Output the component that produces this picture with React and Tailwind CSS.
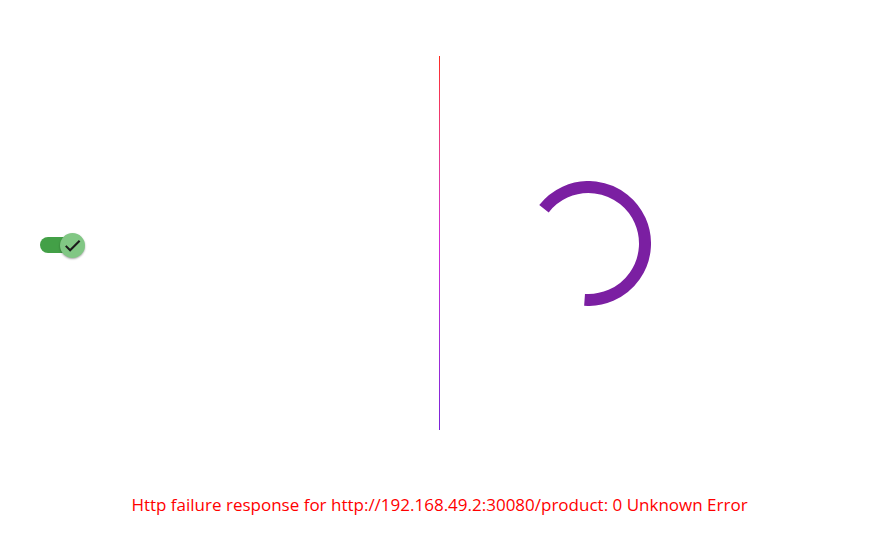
import React from "react";

function Toggle() {
  return (
    <div className="relative w-[46px] h-[24px] flex items-center">
      <div className="w-[40px] h-[16px] rounded-full bg-[#43a047]" />
      <div className="absolute left-[20px] top-0 w-[25px] h-[25px] rounded-full bg-[#81c784] shadow-[0_1px_2px_rgba(0,0,0,0.35)] flex items-center justify-center">
        <svg width="19" height="19" viewBox="0 0 24 24" fill="none">
          <path d="M3.5 12.5l5.5 5.5L21 6" stroke="#1b1b1b" strokeWidth="2.6" strokeLinecap="butt" />
        </svg>
      </div>
    </div>
  );
}

function Spinner() {
  // arc from ~218deg clockwise to ~94deg (screen coords), radius 56.5, stroke 12
  const cx = 62.5;
  const cy = 62.5;
  const r = 56.5;
  const a1 = (218 * Math.PI) / 180;
  const a2 = (94 * Math.PI) / 180;
  const x1 = cx + r * Math.cos(a1);
  const y1 = cy + r * Math.sin(a1);
  const x2 = cx + r * Math.cos(a2);
  const y2 = cy + r * Math.sin(a2);
  return (
    <svg width="125" height="125" viewBox="0 0 125 125">
      <path
        d={`M${x1} ${y1} A${r} ${r} 0 1 1 ${x2} ${y2}`}
        stroke="#7b1fa2"
        strokeWidth="12"
        fill="none"
      />
    </svg>
  );
}

export default function App() {
  return (
    <div className="w-[885px] h-[550px] bg-white flex flex-col" style={{ fontFamily: "'Open Sans', 'Noto Sans', sans-serif" }}>
      <div className="flex flex-row h-[374px] mt-[56px]">
        <div className="w-[439px] flex items-center pl-[40px] pt-[4px]">
          <Toggle />
        </div>
        <div className="w-px h-full bg-gradient-to-b from-[#ff2a1a] via-[#d42ad6] to-[#7a22d8]" />
        <div className="flex-1 flex items-center pl-[86px] pt-[1px]">
          <Spinner />
        </div>
      </div>
      <div className="mt-[63px] text-center text-[17px] leading-[24px] text-[#ff0000] pr-[6px]">
        Http failure response for http://192.168.49.2:30080/product: 0 Unknown Error
      </div>
    </div>
  );
}
